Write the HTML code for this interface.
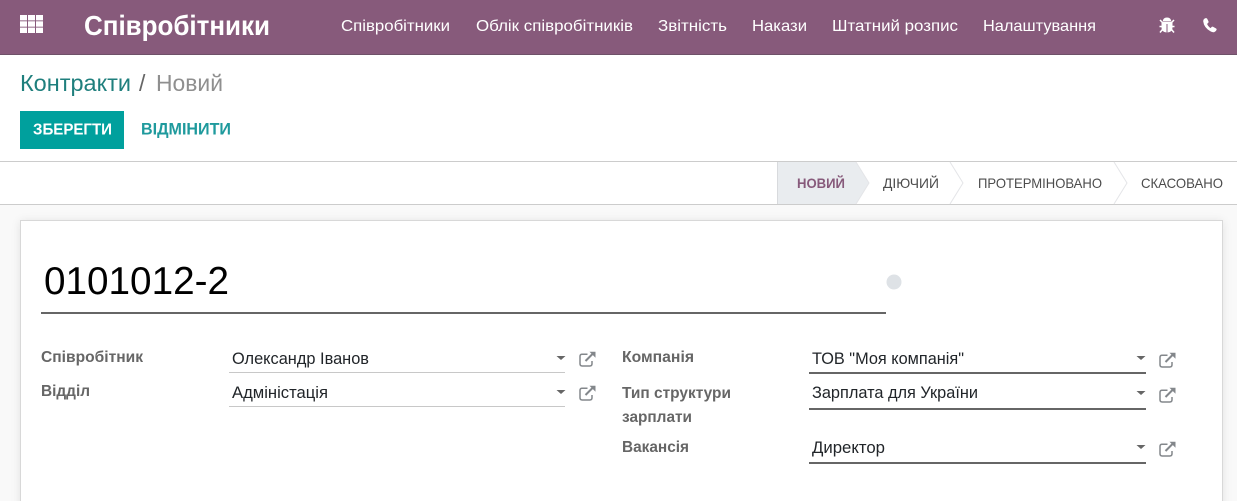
<!DOCTYPE html>
<html lang="uk">
<head>
<meta charset="utf-8">
<title>Контракти</title>
<style>
html,body{margin:0;padding:0;width:1237px;height:501px;overflow:hidden;background:#fff}
svg{display:block;position:absolute;left:0;top:0}
text{font-family:"Liberation Sans",sans-serif}
.m{font-size:16px;fill:#fff}
.st{font-size:14px;fill:#4c4c4c}
.l{font-size:16px;font-weight:700;fill:#666}
.v{font-size:16.5px;fill:#212529}
</style>
</head>
<body>
<svg width="1237" height="501" viewBox="0 0 1237 501" xmlns="http://www.w3.org/2000/svg">
<defs>
<filter id="sh" x="-3%" y="-10%" width="106%" height="120%"><feGaussianBlur stdDeviation="5"/></filter>
<g id="ext" fill="none" stroke="#83878b" stroke-width="1.5">
<path d="M8.5 3.2H3.2Q1 3.2 1 5.4V12.8Q1 15 3.2 15H10.8Q13 15 13 12.8V10"/>
<path d="M6.5 10L13.5 3" stroke-width="2"/>
<path d="M10.5 0.8H16.5V6.8Z" fill="#83878b" stroke="none"/>
</g>
</defs>

<!-- navbar -->
<rect x="0" y="0" width="1237" height="54" fill="#875a7b"/>
<rect x="0" y="54" width="1237" height="1" fill="#6e5168"/>
<g fill="#fff">
<rect x="20" y="15" width="7" height="5.4"/><rect x="28" y="15" width="7" height="5.4"/><rect x="36" y="15" width="7" height="5.4"/>
<rect x="20" y="21.3" width="7" height="5.4"/><rect x="28" y="21.3" width="7" height="5.4"/><rect x="36" y="21.3" width="7" height="5.4"/>
<rect x="20" y="27.6" width="7" height="5.4"/><rect x="28" y="27.6" width="7" height="5.4"/><rect x="36" y="27.6" width="7" height="5.4"/>
</g>
<text x="84" y="35" font-size="27.5" font-weight="700" fill="#fff" textLength="186" lengthAdjust="spacingAndGlyphs">Співробітники</text>
<text class="m" x="341" y="31" textLength="109" lengthAdjust="spacingAndGlyphs">Співробітники</text>
<text class="m" x="476" y="31" textLength="157" lengthAdjust="spacingAndGlyphs">Облік співробітників</text>
<text class="m" x="658" y="31" textLength="69" lengthAdjust="spacingAndGlyphs">Звітність</text>
<text class="m" x="752" y="31" textLength="55" lengthAdjust="spacingAndGlyphs">Накази</text>
<text class="m" x="832" y="31" textLength="126" lengthAdjust="spacingAndGlyphs">Штатний розпис</text>
<text class="m" x="983" y="31" textLength="113" lengthAdjust="spacingAndGlyphs">Налаштування</text>

<!-- bug -->
<g fill="#fff" stroke="#fff">
<path d="M1162.8 21.5Q1163 17.5 1167 17.5Q1171 17.5 1171.2 21.5Z" stroke="none"/>
<path d="M1161.5 22H1172.5V27.5Q1172.5 32 1167.5 32.5V24H1166.5V32.5Q1161.5 32 1161.5 27.5Z" stroke="none"/>
<path d="M1160 20L1162.5 22.5M1174 20L1171.5 22.5M1159.5 26.5H1162M1174.5 26.5H1172M1160 32.5L1162.5 29.5M1174 32.5L1171.5 29.5" fill="none" stroke-width="1.5"/>
</g>
<!-- phone -->
<path d="M1205.2 18.3Q1203.3 19.2 1203.2 21.2Q1203.9 27.7 1210.8 31.5Q1212.6 32.5 1214.3 32.1Q1216.1 31.4 1216.6 29.7Q1216.8 28.9 1216.1 28.5L1213 26.8Q1212.1 26.4 1211.5 27.1L1210.6 28.1Q1208 26.5 1207.1 23.9L1208.2 22.9Q1208.8 22.2 1208.5 21.4L1207.2 18.7Q1206.4 17.7 1205.2 18.3Z" fill="#fff"/>

<!-- control panel -->
<text x="20" y="91" font-size="23" fill="#1f7f7d" textLength="111" lengthAdjust="spacingAndGlyphs">Контракти</text>
<text x="139" y="91" font-size="23" fill="#666">/</text>
<text x="156" y="91" font-size="23" fill="#8f8f8f" textLength="67" lengthAdjust="spacingAndGlyphs">Новий</text>
<rect x="20" y="111" width="104" height="38" fill="#00a09d"/>
<text x="33" y="134.5" font-size="16" font-weight="700" fill="#fff" textLength="79" lengthAdjust="spacingAndGlyphs">ЗБЕРЕГТИ</text>
<text x="141" y="134.5" font-size="16.5" font-weight="700" fill="#1f9a9d" textLength="90" lengthAdjust="spacingAndGlyphs">ВІДМІНИТИ</text>

<!-- status bar -->
<rect x="0" y="205" width="1237" height="296" fill="#f9f9f9"/>
<rect x="0" y="161" width="1237" height="1" fill="#ccc"/>
<rect x="0" y="204" width="1237" height="1" fill="#ccc"/>
<path d="M777.5 162H856L869 183L856 204H777.5Z" fill="#e9ecef"/>
<path d="M777.5 162V204" stroke="#d8dadd" fill="none"/>
<path d="M856 162L869 183L856 204" stroke="#e4e5e8" fill="none"/>
<path d="M950 162L963 183L950 204" stroke="#e4e5e8" fill="none"/>
<path d="M1114 162L1127 183L1114 204" stroke="#e4e5e8" fill="none"/>
<text x="797" y="188" font-size="14" font-weight="700" fill="#875a7b" textLength="48" lengthAdjust="spacingAndGlyphs">НОВИЙ</text>
<text class="st" x="883" y="188" textLength="56" lengthAdjust="spacingAndGlyphs">ДІЮЧИЙ</text>
<text class="st" x="978" y="188" textLength="124" lengthAdjust="spacingAndGlyphs">ПРОТЕРМІНОВАНО</text>
<text class="st" x="1141" y="188" textLength="82" lengthAdjust="spacingAndGlyphs">СКАСОВАНО</text>

<!-- sheet -->
<rect x="20" y="221" width="1203" height="290" fill="#000" opacity=".09" filter="url(#sh)"/>
<rect x="20.5" y="220.5" width="1202" height="290" fill="#fff" stroke="#d8d8d8"/>

<text x="44" y="294" font-size="38.5" fill="#000" textLength="185" lengthAdjust="spacingAndGlyphs">0101012-2</text>
<rect x="41" y="312" width="845" height="2" fill="#666"/>
<circle cx="894" cy="282" r="7.5" fill="#dee2e6"/>

<!-- left group -->
<text class="l" x="41" y="362" textLength="102" lengthAdjust="spacingAndGlyphs">Співробітник</text>
<text class="l" x="41" y="396" textLength="49" lengthAdjust="spacingAndGlyphs">Відділ</text>
<text class="v" x="232" y="364" textLength="137" lengthAdjust="spacingAndGlyphs">Олександр Іванов</text>
<text class="v" x="232" y="398" textLength="96" lengthAdjust="spacingAndGlyphs">Адміністація</text>
<rect x="229" y="372" width="336" height="1" fill="#c8c8c8"/>
<rect x="229" y="406" width="336" height="1" fill="#c8c8c8"/>
<path d="M556.5 356H565.5L561 360Z M556.5 390H565.5L561 394Z" fill="#666"/>
<use href="#ext" x="579" y="351"/>
<use href="#ext" x="579" y="385"/>

<!-- right group -->
<text class="l" x="622" y="362" textLength="72" lengthAdjust="spacingAndGlyphs">Компанія</text>
<text class="l" x="622" y="398" textLength="109" lengthAdjust="spacingAndGlyphs">Тип структури</text>
<text class="l" x="622" y="422" textLength="70" lengthAdjust="spacingAndGlyphs">зарплати</text>
<text class="l" x="622" y="452" textLength="67" lengthAdjust="spacingAndGlyphs">Вакансія</text>
<text class="v" x="812" y="364" textLength="152" lengthAdjust="spacingAndGlyphs">ТОВ "Моя компанія"</text>
<text class="v" x="812" y="398" textLength="166" lengthAdjust="spacingAndGlyphs">Зарплата для України</text>
<text class="v" x="812" y="453" textLength="73" lengthAdjust="spacingAndGlyphs">Директор</text>
<rect x="809" y="372" width="337" height="2" fill="#666"/>
<rect x="809" y="408" width="337" height="2" fill="#666"/>
<rect x="809" y="462" width="337" height="2" fill="#666"/>
<path d="M1136.5 356H1145.5L1141 360Z M1136.5 391H1145.5L1141 395Z M1136.5 445H1145.5L1141 449Z" fill="#666"/>
<use href="#ext" x="1159" y="352"/>
<use href="#ext" x="1159" y="387"/>
<use href="#ext" x="1159" y="441"/>
</svg>
</body>
</html>
